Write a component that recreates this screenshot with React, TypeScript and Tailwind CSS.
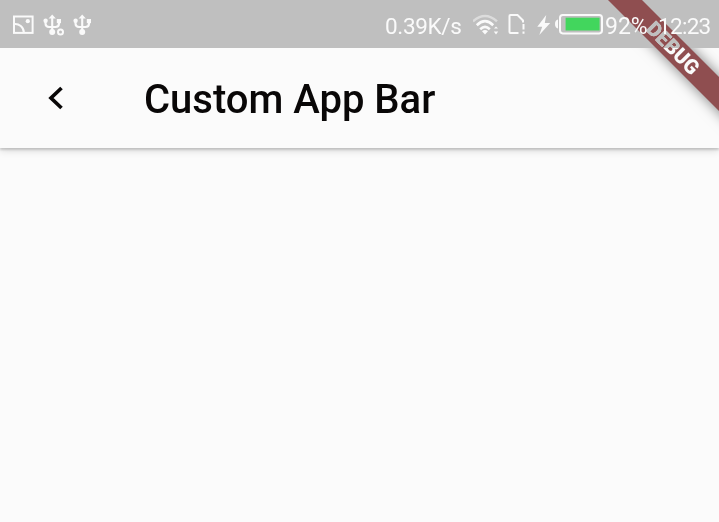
import React from "react";

function ScreenshotIcon() {
  return (
    <svg className="h-[20px] w-[22px]" viewBox="0 0 22 20" fill="none" stroke="#fafafa" strokeWidth="2">
      <rect x="2" y="1.5" width="18.6" height="16.4" />
      <path d="M2 9C7 8.3 11.8 12.4 11.9 17.8" />
      <circle cx="15.8" cy="6.2" r="2.1" fill="#fafafa" stroke="none" />
    </svg>
  );
}

function UsbIcon({ gear = false }: { gear?: boolean }) {
  return (
    <svg className="h-[22px] w-[22px]" viewBox="0 0 22 22" fill="none" stroke="#fafafa" strokeWidth="2.1">
      <path d="M9.2 3V18M2.5 8V9.5Q2.5 13 6 13H12.5Q16 13 16 9.5V8" />
      <path d="M5.6 4.6L9.2 .4L12.8 4.6Z" fill="#fafafa" stroke="none" />
      <circle cx="2.6" cy="6.8" r="2.2" fill="#fafafa" stroke="none" />
      <rect x="13.8" y="5" width="4.2" height="4.2" fill="#fafafa" stroke="none" />
      <circle cx="9.2" cy="18" r="3" fill="#fafafa" stroke="none" />
      {gear && <circle cx="17.5" cy="18" r="2.5" strokeWidth="2" />}
    </svg>
  );
}

function WifiIcon() {
  return (
    <svg className="h-[22px] w-[28px]" viewBox="0 0 28 22" fill="none" stroke="#fafafa">
      <path d="M0 7.4Q12 -3.4 24 7.4" strokeWidth="2.6" opacity=".5" />
      <path d="M3.8 11.2Q12 3.2 20.2 11.2" strokeWidth="2.6" />
      <path d="M7.2 15.2Q12 10.6 16.8 15.2" strokeWidth="2.6" />
      <path d="M9 17.2Q12 14.8 15 17.2L12 20.4Z" fill="#fafafa" stroke="none" />
      <path d="M20.8 17.6H25.2L23 20.4ZM21 14.6H25L23 12.6Z" fill="#fafafa" stroke="none" />
    </svg>
  );
}

function SimIcon() {
  return (
    <svg className="h-[22px] w-[19px]" viewBox="0 0 19 22" fill="none" stroke="#fafafa" strokeWidth="2">
      <path d="M11.5 20H3.5Q2.5 20 2.5 19V3Q2.5 2 3.5 2H10.5L16 7.5V9.5" />
      <path d="M16.5 11V16.5M16.5 18.5V20.8" strokeWidth="2" />
    </svg>
  );
}

function BatteryIcon() {
  return (
    <svg className="h-[22px] w-[50px]" viewBox="0 0 50 22" fill="none">
      <path d="M3 6.5Q0 7.4 0 11T3 15.5Z" fill="#fafafa" />
      <rect x="5" y="2" width="42" height="18.4" rx="2.8" stroke="#fafafa" strokeWidth="2" />
      <rect x="10.6" y="4.7" width="34" height="12.8" fill="#42d65d" />
    </svg>
  );
}

function StatusBar() {
  return (
    <header className="relative z-30 flex h-12 items-center pl-3 text-[22px] leading-none text-[#fafafa]">
      <span className="mt-[2px] flex items-center">
        <ScreenshotIcon />
        <span className="ml-[9px] flex gap-[8px]">
          <UsbIcon gear />
          <UsbIcon />
        </span>
      </span>
      <span className="ml-auto flex items-center">
        <span className="mt-[4px] w-[88px] text-[22.5px] tracking-[-0.35px]">0.39K/s</span>
        <span className="mt-px flex w-[34px]"><WifiIcon /></span>
        <SimIcon />
        <svg className="mt-px ml-[11px] h-[22px] w-[14px]" viewBox="0 0 14 22" fill="#fafafa">
          <path d="M9.2 1L.3 12.8H5.2L2.3 21L13.2 9H7.8Z" />
        </svg>
        <span className="ml-[4px] flex"><BatteryIcon /></span>
        <span className="mt-[4px] w-[53px] whitespace-nowrap text-[23px]">92%</span>
        <span className="mt-[4px] mr-[7px] w-[54px] whitespace-nowrap text-[22.5px] tracking-[-0.7px]">12:23</span>
      </span>
    </header>
  );
}

export default function App() {
  return (
    <div className="relative flex h-[522px] w-[719px] flex-col overflow-hidden bg-[#fbfbfb] font-['Roboto',sans-serif]">
      <StatusBar />
      <nav className="flex h-[100px] items-center bg-[#fbfbfb] shadow-[0_2px_8px_rgba(0,0,0,0.16),0_2px_2px_rgba(0,0,0,0.14)]">
        <svg className="ml-[45px] h-[30px] w-[20px]" viewBox="0 0 20 30" fill="none" stroke="#090707" strokeWidth="3.7">
          <path d="M16.5 5L6 15L16.5 25" />
        </svg>
        <h1 className="mt-[3px] ml-[79px] text-[40px] leading-none font-medium whitespace-nowrap text-[#090707]">Custom App Bar</h1>
      </nav>
      <main className="flex-1 bg-transparent" />
      <div className="absolute top-[35.5px] left-[570.5px] z-10 flex h-6 w-[204px] rotate-45 items-center justify-center bg-[#8f4e50] text-[20.4px] leading-none font-black text-[#fafafa] shadow-[0_0_14px_rgba(0,0,0,0.5)]">
        DEBUG
      </div>
      <div className="absolute inset-x-0 top-0 z-20 h-12 bg-[#bfbfbf] mix-blend-darken" />
    </div>
  );
}
